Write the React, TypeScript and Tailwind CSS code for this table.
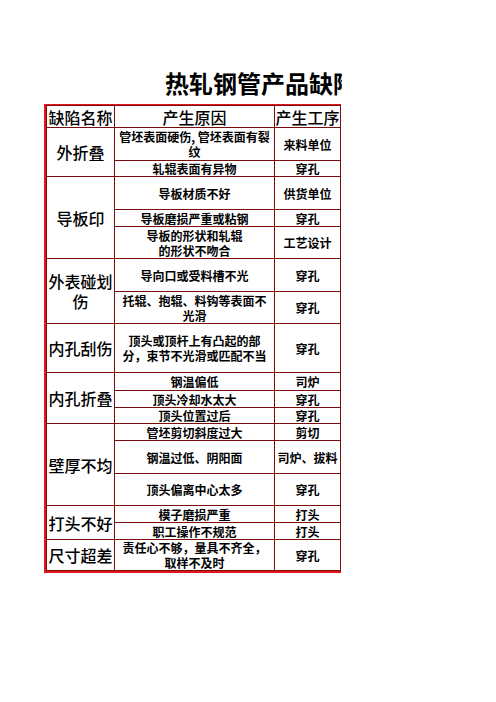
import React from 'react';

type Row = { cause: React.ReactNode; step: string; h: number };
type Group = { name: string; rows: Row[] };

const groups: Group[] = [
  {
    name: '外折叠',
    rows: [
      { cause: <>管坯表面硬伤, 管坯表面有裂<br />纹</>, step: '来料单位', h: 33 },
      { cause: '轧辊表面有异物', step: '穿孔', h: 16 },
    ],
  },
  {
    name: '导板印',
    rows: [
      { cause: '导板材质不好', step: '供货单位', h: 33 },
      { cause: '导板磨损严重或粘钢', step: '穿孔', h: 17 },
      { cause: <>导板的形状和轧辊<br />的形状不吻合</>, step: '工艺设计', h: 32 },
    ],
  },
  {
    name: '外表碰划伤',
    rows: [
      { cause: '导向口或受料槽不光', step: '穿孔', h: 33 },
      { cause: <>托辊、抱辊、料钩等表面不<br />光滑</>, step: '穿孔', h: 32 },
    ],
  },
  {
    name: '内孔刮伤',
    rows: [
      { cause: <>顶头或顶杆上有凸起的部<br />分，束节不光滑或匹配不当</>, step: '穿孔', h: 49 },
    ],
  },
  {
    name: '内孔折叠',
    rows: [
      { cause: '钢温偏低', step: '司炉', h: 18 },
      { cause: '顶头冷却水太大', step: '穿孔', h: 17 },
      { cause: '顶头位置过后', step: '穿孔', h: 16 },
    ],
  },
  {
    name: '壁厚不均',
    rows: [
      { cause: '管坯剪切斜度过大', step: '剪切', h: 17 },
      { cause: '钢温过低、阴阳面', step: '司炉、拔料', h: 33 },
      { cause: '顶头偏离中心太多', step: '穿孔', h: 32 },
    ],
  },
  {
    name: '打头不好',
    rows: [
      { cause: '模子磨损严重', step: '打头', h: 17 },
      { cause: '职工操作不规范', step: '打头', h: 17 },
    ],
  },
  {
    name: '尺寸超差',
    rows: [
      { cause: <>责任心不够，量具不齐全，<br />取样不及时</>, step: '穿孔', h: 31 },
    ],
  },
];

const cell = 'border border-[#7d0d0d] p-0 text-center align-middle';

export default function App() {
  return (
    <div
      className="w-[496px] h-[702px] bg-white text-black overflow-hidden"
      style={{ fontFamily: '"Noto Sans CJK SC", "Noto Sans", sans-serif' }}
    >
      <div className="w-[342px] overflow-hidden whitespace-nowrap pt-[70px] pl-[165px] text-[24px] leading-[26px] font-bold">
        热轧钢管产品缺陷分析表
      </div>

      <div className="mt-[8px] ml-[44px] w-[297px] border-l-2 border-t border-r border-b-2 border-[#e3161d]">
        <table className="w-full table-fixed border-collapse">
          <colgroup>
            <col className="w-[68px]" />
            <col className="w-[160px]" />
            <col className="w-[66px]" />
          </colgroup>
          <tbody>
            <tr>
              <td className={`${cell} h-[22px] text-[16px] leading-[20px] font-medium`}>缺陷名称</td>
              <td className={`${cell} text-[16px] leading-[20px] font-medium`}>产生原因</td>
              <td className={`${cell} text-[16px] leading-[20px] font-medium whitespace-nowrap`}>产生工序</td>
            </tr>
            {groups.map((g) =>
              g.rows.map((r, i) => (
                <tr key={g.name + i}>
                  {i === 0 && (
                    <td
                      rowSpan={g.rows.length}
                      className={`${cell} text-[16px] leading-[20px] font-medium`}
                    >
                      {g.name}
                    </td>
                  )}
                  <td
                    className={`${cell} text-[12px] leading-[15px] font-bold whitespace-nowrap`}
                    style={{ height: r.h }}
                  >
                    {r.cause}
                  </td>
                  <td className={`${cell} text-[12px] leading-[15px] font-bold whitespace-nowrap`}>
                    {r.step}
                  </td>
                </tr>
              ))
            )}
          </tbody>
        </table>
      </div>
    </div>
  );
}
